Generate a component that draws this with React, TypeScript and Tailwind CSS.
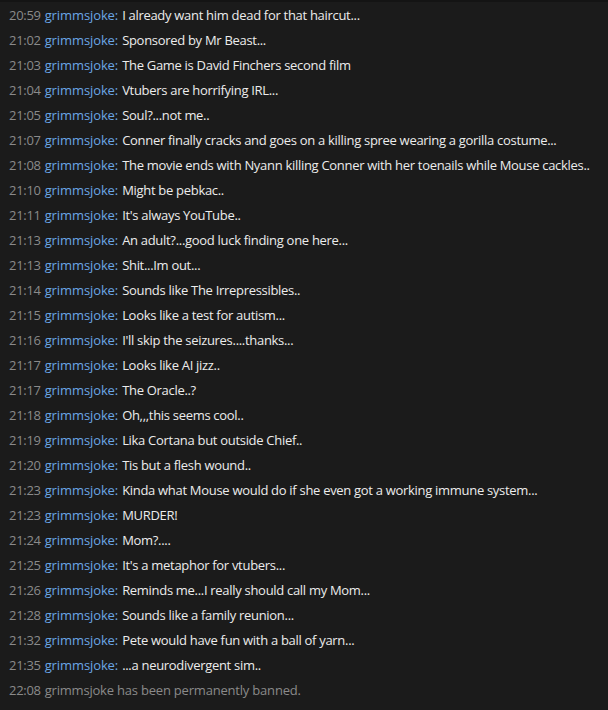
import React from "react";

const rows: [string, string][] = [
  ["20:59", "I already want him dead for that haircut..."],
  ["21:02", "Sponsored by Mr Beast..."],
  ["21:03", "The Game is David Finchers second film"],
  ["21:04", "Vtubers are horrifying IRL..."],
  ["21:05", "Soul?...not me.."],
  ["21:07", "Conner finally cracks and goes on a killing spree wearing a gorilla costume..."],
  ["21:08", "The movie ends with Nyann killing Conner with her toenails while Mouse cackles.."],
  ["21:10", "Might be pebkac.."],
  ["21:11", "It's always YouTube.."],
  ["21:13", "An adult?...good luck finding one here..."],
  ["21:13", "Shit...Im out..."],
  ["21:14", "Sounds like The Irrepressibles.."],
  ["21:15", "Looks like a test for autism..."],
  ["21:16", "I'll skip the seizures....thanks..."],
  ["21:17", "Looks like AI jizz.."],
  ["21:17", "The Oracle..?"],
  ["21:18", "Oh,,,this seems cool.."],
  ["21:19", "Lika Cortana but outside Chief.."],
  ["21:20", "Tis but a flesh wound.."],
  ["21:23", "Kinda what Mouse would do if she even got a working immune system..."],
  ["21:23", "MURDER!"],
  ["21:24", "Mom?...."],
  ["21:25", "It's a metaphor for vtubers..."],
  ["21:26", "Reminds me...I really should call my Mom..."],
  ["21:28", "Sounds like a family reunion..."],
  ["21:32", "Pete would have fun with a ball of yarn..."],
  ["21:35", "...a neurodivergent sim.."],
];

export default function App() {
  return (
    <div
      className="w-[608px] h-[710px] bg-[#1b1b1b] border-t-2 border-[#141414] overflow-hidden text-[13px]"
      style={{ fontFamily: '"Open Sans", "Noto Sans", sans-serif' }}
    >
      <div className="flex flex-col pt-[1px]">
        {rows.map(([t, m], i) => (
          <div key={i} className="h-[25px] flex items-center pl-[9px] whitespace-nowrap">
            <span className="text-[#8a8a8a] tracking-[-0.3px]">{t}</span>
            <span className="ml-[4px] text-[#6aa6e6] tracking-[-0.1px]">grimmsjoke:</span>
            <span className="ml-[4px] text-[#ececec] tracking-[-0.3px]">{m}</span>
          </div>
        ))}
        <div className="h-[25px] flex items-center pl-[9px] whitespace-nowrap text-[#8a8a8a]">
          <span className="tracking-[-0.3px]">22:08</span>
          <span className="ml-[4px] tracking-[-0.2px]">grimmsjoke has been permanently banned.</span>
        </div>
      </div>
    </div>
  );
}
